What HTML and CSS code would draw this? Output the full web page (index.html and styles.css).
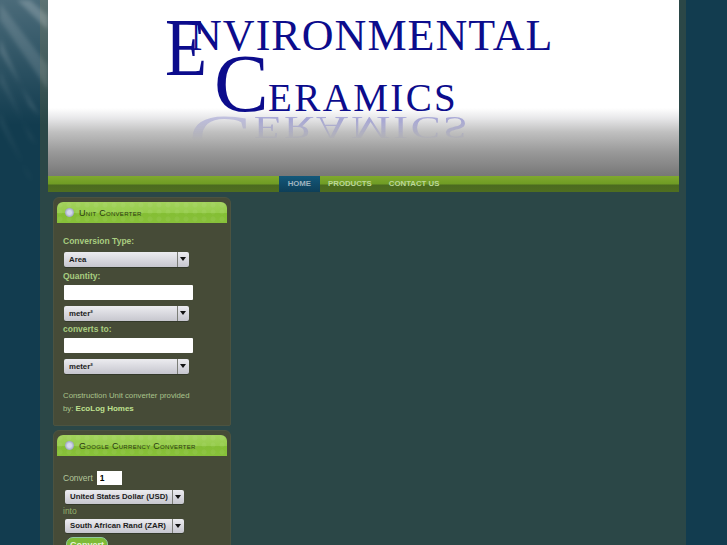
FILE: index.html
```html
<!DOCTYPE html>
<html lang="en">
<head>
    <meta charset="UTF-8">
    <title>Environmental Ceramics</title>
    <link rel="stylesheet" href="styles.css">
</head>
<body>
    <svg class="rays" width="48" height="190" viewBox="0 0 48 190" aria-hidden="true">
        <defs>
            <linearGradient id="fade" x1="0" y1="0" x2="0" y2="1">
                <stop offset="0" stop-color="#fff" stop-opacity=".24"/>
                <stop offset="1" stop-color="#fff" stop-opacity="0"/>
            </linearGradient>
            <filter id="soft"><feGaussianBlur stdDeviation="2"/></filter>
        </defs>
        <rect width="48" height="125" fill="url(#fade)"/>
        <g fill="#fff" filter="url(#soft)">
            <polygon points="17,0 30,0 48,16 48,30" opacity=".2"/>
            <polygon points="0,3 0,20 48,90 48,66" opacity=".13"/>
            <polygon points="0,38 0,52 40,116 30,106" opacity=".15"/>
            <polygon points="0,70 0,82 36,144 30,138" opacity=".08"/>
            <polygon points="0,112 0,124 32,180 28,176" opacity=".06"/>
        </g>
    </svg>
    <div class="wrapper">
        <header class="header">
            <div class="logo">
                <div class="logo-line1">NVIRONMENTAL</div>
                <div class="big-e">E</div>
                <div class="big-c">C</div>
                <div class="logo-line2">ERAMICS</div>
                <div class="logo-mirror"><span class="mirror-c">C</span>ERAMICS</div>
            </div>
        </header>
        <nav class="nav">
            <a class="nav-item active" href="#">HOME</a>
            <a class="nav-item" href="#">PRODUCTS</a>
            <a class="nav-item" href="#">CONTACT US</a>
        </nav>
        <aside class="sidebar">
            <section class="box">
                <h3 class="box-title"><span class="bullet"></span>Unit Converter</h3>
                <form class="box-body unit-form">
                    <label class="field-label first">Conversion Type:</label>
                    <div class="select"><span>Area</span><i class="arrow"></i></div>
                    <label class="field-label">Quantity:</label>
                    <input class="text-input" type="text">
                    <div class="select"><span>meter²</span><i class="arrow"></i></div>
                    <label class="field-label tight">converts to:</label>
                    <input class="text-input" type="text">
                    <div class="select"><span>meter²</span><i class="arrow"></i></div>
                    <p class="credit">Construction Unit converter provided by: <a href="#">EcoLog Homes</a></p>
                </form>
            </section>
            <section class="box">
                <h3 class="box-title"><span class="bullet"></span>Google Currency Converter</h3>
                <form class="box-body currency-form">
                    <div class="convert-row">Convert <input class="amount" type="text" value="1"></div>
                    <div class="select wide"><span>United States Dollar (USD)</span><i class="arrow"></i></div>
                    <div class="into">into</div>
                    <div class="select wide second"><span>South African Rand (ZAR)</span><i class="arrow"></i></div>
                    <button class="convert-btn" type="button">Convert</button>
                </form>
            </section>
        </aside>
    </div>
</body>
</html>
```
FILE: styles.css
```css
body {
    margin: 0;
    height: 545px;
    overflow: hidden;
    background: #123c4f;
    font-family: "Liberation Sans", Arial, sans-serif;
    font-size: 8.5px;
}
.rays { position: absolute; left: 0; top: 0; }

.wrapper {
    width: 631px;
    height: 545px;
    margin-left: 40px;
    padding: 0 7px 0 8px;
    background: #2b4747;
    overflow: hidden;
}

/* header */
.header {
    height: 176px;
    background: linear-gradient(#fff 0, #fff 108px, #e8e8ea 118px, #c0c0c0 132px, #999 152px, #777 176px);
}
.logo {
    position: relative;
    height: 176px;
    font-family: "Liberation Serif", serif;
    color: #0c0c8c;
    line-height: 1;
    white-space: nowrap;
}
.logo-line1 { position: absolute; left: 142px; top: 14px; font-size: 44px; letter-spacing: 1.05px; }
.big-e { position: absolute; left: 117px; top: 6px; font-size: 83px; transform: scaleX(0.83); transform-origin: left; }
.big-c { position: absolute; left: 166px; top: 43px; font-size: 82px; }
.logo-line2 { position: absolute; left: 220px; top: 78px; font-size: 39px; letter-spacing: 2.4px; }
.logo-mirror {
    position: absolute;
    left: 158px;
    top: 108px;
    font-size: 39px;
    letter-spacing: 2.4px;
    color: #6c6cc4;
    transform: scale(1.14, -0.8);
    -webkit-mask-image: linear-gradient(to top, #000 25%, transparent 90%);
    mask-image: linear-gradient(to top, #000 25%, transparent 90%);
    opacity: 0.5;
}
.mirror-c { font-size: 82px; line-height: 0; opacity: 0.65; }

/* nav */
.nav {
    height: 16px;
    display: flex;
    justify-content: center;
    background: linear-gradient(#7fa82e 0, #6f9c24 8px, #4a6b1f 9px, #4f6e20 16px);
}
.nav-item {
    padding: 0 8.5px;
    line-height: 15px;
    font-size: 7.8px;
    font-weight: bold;
    color: #bcd79a;
    text-decoration: none;
}
.nav-item.active {
    background: linear-gradient(#13587a, #0e3f58);
    color: #9fb3be;
}

/* sidebar */
.sidebar { width: 178px; margin-left: 5px; padding-top: 5px; }
.box {
    background: #464b37;
    border: 1px solid #4c5340;
    border-radius: 6px 6px 2px 2px;
    padding: 4px 3px 0;
    margin-bottom: 4px;
}
.box-title {
    display: flex;
    align-items: center;
    gap: 5px;
    height: 21px;
    margin: 0;
    padding-left: 8px;
    border-radius: 6px 6px 0 0;
    background:
        radial-gradient(circle at 3px 3px, rgba(255, 255, 255, 0.05) 2px, transparent 3px) 0 0 / 9px 7px,
        linear-gradient(#a2d25c, #96cc4b 50%, #84be34 55%, #88c13a);
    font-size: 9px;
    letter-spacing: 0.3px;
    font-weight: normal;
    font-variant: small-caps;
    color: #2a3a12;
}
.bullet {
    width: 9px;
    height: 9px;
    border-radius: 50%;
    background: radial-gradient(circle, #d4d8ec 30%, #99a0c0 75%, #6f7790 100%);
}
.box-body { padding: 0 6px; color: #b3c79b; }
.unit-form { padding-top: 10px; padding-bottom: 10px; }
.currency-form { padding-top: 15px; height: 100px; }

.field-label {
    display: block;
    height: 18px;
    font-weight: bold;
    line-height: 18px;
    color: #a8cd80;
}
.field-label.first { height: 19px; line-height: 17px; }
.field-label.tight { height: 17px; line-height: 17px; }
.select {
    display: flex;
    justify-content: space-between;
    width: 125px;
    height: 15px;
    margin-left: 1px;
    border-radius: 2px;
    background: linear-gradient(#ececf0, #c6c6ce);
    box-shadow: 0 1px 0 #33392a;
    color: #1c1c1c;
    font-size: 7.8px;
    font-weight: bold;
    line-height: 15px;
}
.select span { padding-left: 5px; white-space: nowrap; }
.arrow {
    position: relative;
    width: 11px;
    border-left: 1px solid #7b7d77;
}
.arrow::after {
    content: "";
    position: absolute;
    left: 2px;
    top: 5px;
    border: 3px solid transparent;
    border-top: 4px solid #111;
    border-bottom: 0;
}
.text-input {
    display: block;
    width: 129px;
    height: 15px;
    margin: 0 0 6px 1px;
    padding: 0;
    border: 0;
    border-radius: 1px;
    background: #fff;
}
.credit {
    width: 128px;
    margin: 15px 0 0;
    font-size: 7.8px;
    line-height: 13px;
    color: #a9c48c;
}
.credit a { color: #bfe08f; font-weight: bold; font-size: 8px; text-decoration: none; }

.convert-row { display: flex; align-items: center; gap: 4px; height: 14px; }
.amount {
    width: 25px;
    height: 14px;
    padding: 0 0 0 3px;
    border: 0;
    box-sizing: border-box;
    background: #fff;
    font-family: inherit;
    font-size: 8.5px;
    font-weight: bold;
}
.select.wide { width: 119px; height: 14px; line-height: 14px; margin: 5px 0 0 2px; }
.select.wide.second { margin-top: 0; }
.into { height: 15px; line-height: 15px; color: #94b06c; }
.convert-btn {
    display: block;
    margin: 4px 0 0 3px;
    width: 42px;
    height: 16px;
    padding: 0;
    border: 1px solid #8fc9a0;
    border-radius: 7px;
    background: #7ebb38;
    color: #e6f2d6;
    font-family: inherit;
    font-size: 9px;
    font-weight: bold;
}
```
